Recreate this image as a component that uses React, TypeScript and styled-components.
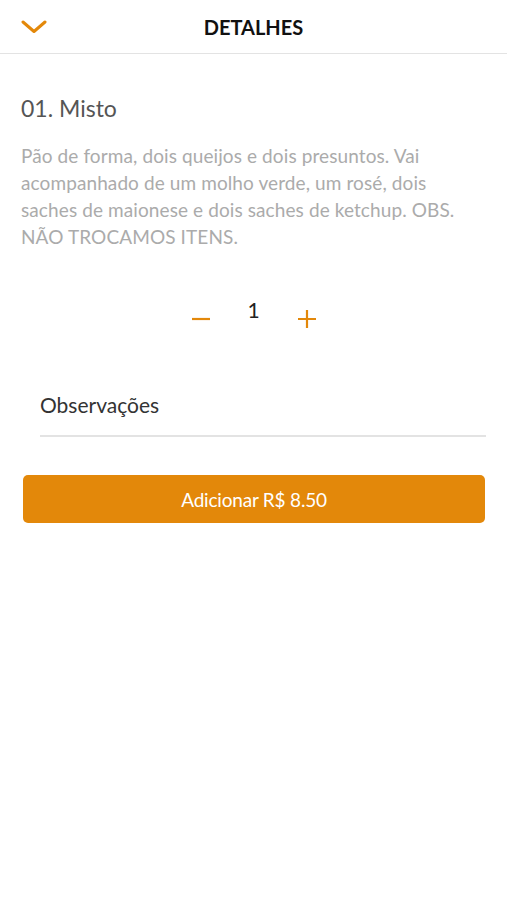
import { useState } from "react";
import styled, { createGlobalStyle } from "styled-components";

const palette = {
    orange: "#e3880a",
    title: "#555555",
    text: "#ababab",
    dark: "#222222",
    line: "#e3e3e3",
};

const GlobalStyle = createGlobalStyle`
    html, body {
        margin: 0;
        padding: 0;
        background: #ffffff;
    }
    body {
        font-family: Lato, "Open Sans", sans-serif;
    }
    * {
        box-sizing: border-box;
    }
`;

const Page = styled.div`
    width: 100%;
    min-height: 900px;
    background: #ffffff;
`;

const Header = styled.header`
    position: relative;
    height: 54px;
    display: flex;
    align-items: center;
    justify-content: center;
    border-bottom: 1px solid ${palette.line};
`;

const BackButton = styled.button`
    position: absolute;
    left: 19px;
    top: 16px;
    width: 30px;
    height: 22px;
    padding: 0;
    border: 0;
    background: transparent;
    display: flex;
    align-items: center;
    justify-content: center;
    cursor: pointer;
`;

const HeaderTitle = styled.h1`
    margin: 0;
    font-size: 20px;
    font-weight: 700;
    color: #111111;
`;

const Content = styled.main`
    padding: 39px 21px 0;
`;

const ItemName = styled.h2`
    margin: 0;
    font-size: 23px;
    font-weight: 400;
    line-height: 30px;
    color: ${palette.title};
`;

const Description = styled.p`
    margin: 19px 0 0;
    font-size: 19px;
    letter-spacing: 0.1px;
    line-height: 27px;
    color: ${palette.text};
`;

const Counter = styled.div`
    margin-top: 47px;
    display: flex;
    justify-content: center;
    align-items: flex-start;
    gap: 34px;
`;

const CounterButton = styled.button`
    width: 24px;
    height: 24px;
    margin-top: 10px;
    padding: 0;
    border: 0;
    background: transparent;
    display: flex;
    align-items: center;
    justify-content: center;
    cursor: pointer;
`;

const Quantity = styled.span`
    font-size: 21px;
    line-height: 25px;
    color: ${palette.dark};
    min-width: 14px;
    text-align: center;
`;

const NotesField = styled.input`
    display: block;
    margin: 46px 0 0 19px;
    width: calc(100% - 19px);
    height: 60px;
    padding: 0 0 4px;
    border: 0;
    border-bottom: 2px solid ${palette.line};
    outline: none;
    font-family: inherit;
    font-size: 21px;
    color: #333333;
    background: transparent;

    &::placeholder {
        color: #333333;
    }
`;

const AddButton = styled.button`
    display: block;
    margin: 38px 0 0 2px;
    width: 462px;
    height: 48px;
    border: 0;
    border-radius: 5px;
    background: ${palette.orange};
    color: #ffffff;
    font-family: inherit;
    font-size: 19px;
    letter-spacing: -0.2px;
    cursor: pointer;
`;

const App = () => {
    const [quantity, setQuantity] = useState(1);
    const price = 8.5;

    return (
        <Page>
            <GlobalStyle />
            <Header>
                <BackButton aria-label="Voltar">
                    <svg width="26" height="14" viewBox="0 0 26 14" fill="none">
                        <path
                            d="M2 2L13 11.5L24 2"
                            stroke={palette.orange}
                            strokeWidth="3"
                            strokeLinecap="round"
                            strokeLinejoin="round"
                        />
                    </svg>
                </BackButton>
                <HeaderTitle>DETALHES</HeaderTitle>
            </Header>
            <Content>
                <ItemName>01. Misto</ItemName>
                <Description>
                    Pão de forma, dois queijos e dois presuntos. Vai acompanhado de um molho verde, um rosé, dois saches de maionese e dois saches de ketchup. OBS. NÃO TROCAMOS ITENS.
                </Description>
                <Counter>
                    <CounterButton aria-label="Diminuir" onClick={() => setQuantity(Math.max(1, quantity - 1))}>
                        <svg width="20" height="20" viewBox="0 0 20 20">
                            <path d="M1 10H19" stroke={palette.orange} strokeWidth="2.2" />
                        </svg>
                    </CounterButton>
                    <Quantity>{quantity}</Quantity>
                    <CounterButton aria-label="Aumentar" onClick={() => setQuantity(quantity + 1)}>
                        <svg width="20" height="20" viewBox="0 0 20 20">
                            <path d="M1 10H19M10 1V19" stroke={palette.orange} strokeWidth="2.2" />
                        </svg>
                    </CounterButton>
                </Counter>
                <NotesField placeholder="Observações" />
                <AddButton>Adicionar R$ {(price * quantity).toFixed(2)}</AddButton>
            </Content>
        </Page>
    );
};

export default App;
